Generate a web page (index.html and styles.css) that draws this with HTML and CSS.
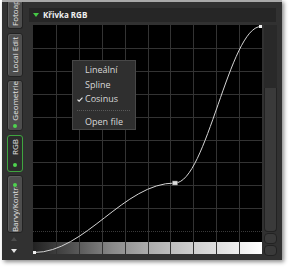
FILE: index.html
```html
<!DOCTYPE html>
<html lang="cs">
<head>
<meta charset="utf-8">
<link rel="stylesheet" href="styles.css">
</head>
<body>
<div class="panel">
  <div class="side">
    <div class="tab tab-foto"><span class="vt">Fotoaparát</span></div>
    <div class="tab tab-local"><span class="vt">Local Edit</span></div>
    <div class="tab tab-geo"><span class="vt">Geometrie</span><span class="dot"></span></div>
    <div class="tab tab-rgb active"><span class="vt">RGB</span><span class="dot"></span></div>
    <div class="tab tab-barvy"><span class="dot"></span><span class="vt clip">Barvy/Kontrast</span></div>
    <div class="arrow up"></div>
    <div class="arrow down"></div>
  </div>
  <div class="main">
    <div class="header"><span class="tri"></span><span class="title">Křivka RGB</span></div>
    <div class="body">
      <div class="graph">
        <svg width="229" height="229" viewBox="0 0 229 229">
          <defs>
            <linearGradient id="gr" x1="0" y1="0" x2="1" y2="0">
              <stop offset="0" stop-color="#222"/>
              <stop offset="0.15" stop-color="#4a4a4a"/>
              <stop offset="0.35" stop-color="#8a8a8a"/>
              <stop offset="0.5" stop-color="#ababab"/>
              <stop offset="0.7" stop-color="#cfcfcf"/>
              <stop offset="0.85" stop-color="#e6e6e6"/>
              <stop offset="1" stop-color="#fff"/>
            </linearGradient>
          </defs>
          <rect width="229" height="229" fill="#000"/>
          <rect x="0" y="217" width="229" height="12" fill="url(#gr)"/>
          <path d="M23.5 0V229M46.5 0V229M69.5 0V229M92.5 0V229M115.5 0V229M137.5 0V229M160.5 0V229M183.5 0V229M206.5 0V229" stroke="#333" stroke-width="1"/>
          <path d="M0 23.5H229M0 46.5H229M0 69.5H229M0 92.5H229M0 115.5H229M0 137.5H229M0 160.5H229M0 183.5H229" stroke="#333" stroke-width="1"/>
          <path d="M0 206.5H229" stroke="#3a3a3a" stroke-width="1" stroke-dasharray="1 1"/>
          <path d="M1 227.5C52.3 227.5 90.7 158 142 158C173.3 158 196.7 1.5 228 1.5" fill="none" stroke="#d4d4d4" stroke-width="1"/>
          <rect x="0" y="226" width="3" height="3" fill="#eee"/>
          <rect x="139.5" y="156" width="5" height="4" fill="#ddd" stroke="#777" stroke-width="0.5"/>
          <rect x="226" y="0" width="3" height="3" fill="#eee"/>
        </svg>
        <div class="menu">
          <div class="item">Lineální</div>
          <div class="item">Spline</div>
          <div class="item checked"><svg class="check" width="6" height="5" viewBox="0 0 6 5"><path d="M0.5 2.6L2.1 4.2L5.5 0.6" fill="none" stroke="#e0e0e0" stroke-width="1.2"/></svg>Cosinus</div>
          <div class="sep"></div>
          <div class="item">Open file</div>
        </div>
      </div>
      <div class="scroll">
        <div class="track"></div>
        <div class="thumb"></div>
        <div class="btn"></div>
        <div class="btn"></div>
      </div>
    </div>
  </div>
</div>
</body>
</html>
```

FILE: styles.css
```css
html, body {
  margin: 0;
  padding: 0;
  background: #fff;
}
body {
  width: 293px;
  height: 270px;
  overflow: hidden;
  font-family: "Open Sans", "Liberation Sans", sans-serif;
}
.panel {
  box-sizing: border-box;
  margin-left: 2px;
  width: 280px;
  height: 260px;
  background: #313131;
  border-top: 2px solid #a9a9a9;
  box-shadow: 2px 2px 4px rgba(0,0,0,0.45);
  display: flex;
}
.side {
  width: 27px;
  padding-left: 5px;
  box-sizing: border-box;
  display: flex;
  flex-direction: column;
  align-items: flex-start;
}
.tab {
  box-sizing: border-box;
  width: 16px;
  background: #4e4e4e;
  border: 1px solid #222;
  border-radius: 3px;
  display: flex;
  flex-direction: column;
  justify-content: flex-end;
  align-items: center;
  overflow: hidden;
  color: #e2e2e2;
  font-size: 8px;
  box-shadow: inset 1px 1px 0 #5e5e5e;
}
.vt {
  writing-mode: vertical-rl;
  transform: rotate(180deg);
  white-space: nowrap;
  line-height: 14px;
}
.dot {
  width: 4px;
  height: 4px;
  border-radius: 50%;
  background: #4fd34f;
  flex: none;
}
.tab-foto {
  height: 27px;
  border-top: none;
  border-radius: 0 0 3px 3px;
  padding-bottom: 2px;
}
.tab-local {
  margin-top: 4px;
  height: 44px;
  justify-content: center;
}
.tab-geo {
  margin-top: 3px;
  height: 51px;
  padding-bottom: 2px;
}
.tab-geo .dot, .tab-rgb .dot {
  margin-top: 3px;
}
.tab-rgb {
  margin-top: 4px;
  height: 37px;
  padding-bottom: 4px;
}
.tab-rgb .vt {
  margin-bottom: 5px;
}
.tab.active {
  background: #2c2c2c;
  border-color: #3fa53f;
  box-shadow: none;
}
.tab-barvy {
  margin-top: 3px;
  height: 58px;
  justify-content: flex-start;
  padding-top: 7px;
}
.tab-barvy .vt.clip {
  flex: 1;
  overflow: hidden;
  min-height: 0;
  display: flex;
  justify-content: flex-start;
}
.tab-barvy .dot {
  margin-bottom: 0;
}
.arrow {
  width: 0;
  height: 0;
  margin-left: 4px;
  border-left: 3.5px solid transparent;
  border-right: 3.5px solid transparent;
}
.arrow.up {
  margin-top: 4px;
  border-bottom: 4px solid #4c4c4c;
}
.arrow.down {
  margin-top: 8px;
  border-top: 4px solid #e4e4e4;
}
.main {
  flex: 1;
  padding-top: 6px;
  display: flex;
  flex-direction: column;
}
.header {
  height: 14px;
  margin-right: 6px;
  background: #262626;
  display: flex;
  align-items: center;
  padding-left: 4px;
}
.tri {
  width: 0;
  height: 0;
  border-left: 3px solid transparent;
  border-right: 3px solid transparent;
  border-top: 4px solid #45c845;
  margin-right: 4px;
}
.title {
  color: #f0f0f0;
  font-weight: 700;
  font-size: 8px;
  line-height: 14px;
}
.body {
  margin-top: 3px;
  padding-left: 4px;
  display: flex;
}
.graph {
  position: relative;
  width: 229px;
  height: 229px;
}
.graph > svg {
  display: block;
}
.menu {
  position: absolute;
  left: 39px;
  top: 35px;
  width: 64px;
  height: 70px;
  box-sizing: border-box;
  background: #2f2f2f;
  border: 1px solid #474747;
  padding-top: 2px;
  color: #d8d8d8;
  font-size: 9px;
}
.item {
  position: relative;
  height: 14.5px;
  line-height: 14.5px;
  padding-left: 12px;
  white-space: nowrap;
}
.check {
  position: absolute;
  left: 4px;
  top: 5px;
}
.sep {
  height: 8px;
  margin: 0 4px;
  background: linear-gradient(90deg, #5a5a5a 50%, transparent 50%) 0 3.5px / 2px 1px repeat-x;
}
.scroll {
  margin-left: 2px;
  width: 13px;
  display: flex;
  flex-direction: column;
}
.track {
  height: 63px;
  background: #292929;
}
.thumb {
  box-sizing: border-box;
  height: 144px;
  background: #3a3a3a;
  border: 1px solid #222;
  border-top: none;
  border-radius: 0 0 4px 4px;
}
.btn {
  box-sizing: border-box;
  margin-top: 1px;
  height: 11px;
  background: #3a3a3a;
  border: 1px solid #222;
  border-radius: 4px;
}
```
